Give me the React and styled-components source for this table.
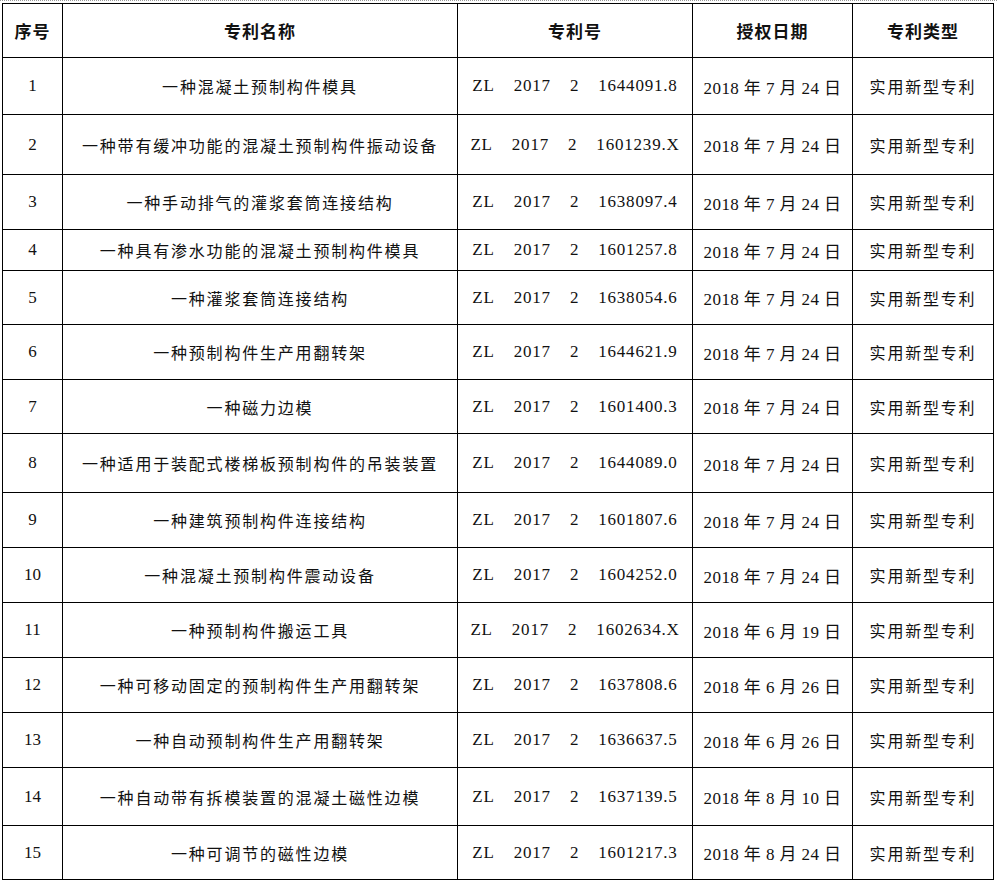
import styled, { createGlobalStyle } from 'styled-components';

const GlobalStyle = createGlobalStyle`
    html, body {
        margin: 0;
        padding: 0;
        background: #fff;
    }
`

const patents = [
    { no: 1, name: '一种混凝土预制构件模具', num: '1644091.8', month: 7, day: 24, h: 57 },
    { no: 2, name: '一种带有缓冲功能的混凝土预制构件振动设备', num: '1601239.X', month: 7, day: 24, h: 60 },
    { no: 3, name: '一种手动排气的灌浆套筒连接结构', num: '1638097.4', month: 7, day: 24, h: 55 },
    { no: 4, name: '一种具有渗水功能的混凝土预制构件模具', num: '1601257.8', month: 7, day: 24, h: 41 },
    { no: 5, name: '一种灌浆套筒连接结构', num: '1638054.6', month: 7, day: 24, h: 54 },
    { no: 6, name: '一种预制构件生产用翻转架', num: '1644621.9', month: 7, day: 24, h: 55 },
    { no: 7, name: '一种磁力边模', num: '1601400.3', month: 7, day: 24, h: 54 },
    { no: 8, name: '一种适用于装配式楼梯板预制构件的吊装装置', num: '1644089.0', month: 7, day: 24, h: 59 },
    { no: 9, name: '一种建筑预制构件连接结构', num: '1601807.6', month: 7, day: 24, h: 55 },
    { no: 10, name: '一种混凝土预制构件震动设备', num: '1604252.0', month: 7, day: 24, h: 55 },
    { no: 11, name: '一种预制构件搬运工具', num: '1602634.X', month: 6, day: 19, h: 55 },
    { no: 12, name: '一种可移动固定的预制构件生产用翻转架', num: '1637808.6', month: 6, day: 26, h: 55 },
    { no: 13, name: '一种自动预制构件生产用翻转架', num: '1636637.5', month: 6, day: 26, h: 55 },
    { no: 14, name: '一种自动带有拆模装置的混凝土磁性边模', num: '1637139.5', month: 8, day: 10, h: 58 },
    { no: 15, name: '一种可调节的磁性边模', num: '1601217.3', month: 8, day: 24, h: 54 },
]

const App = () => {
    return (
        <Page>
            <GlobalStyle />
            <Table>
                <colgroup>
                    <col style={{ width: 60 }} />
                    <col style={{ width: 395 }} />
                    <col style={{ width: 235 }} />
                    <col style={{ width: 160 }} />
                    <col style={{ width: 141 }} />
                </colgroup>
                <thead>
                    <Row $h={54}>
                        <Th>序号</Th>
                        <Th>专利名称</Th>
                        <Th>专利号</Th>
                        <Th>授权日期</Th>
                        <Th>专利类型</Th>
                    </Row>
                </thead>
                <tbody>
                    {patents.map((p) => (
                        <Row key={p.no} $h={p.h}>
                            <NumCell>{p.no}</NumCell>
                            <NameCell>{p.name}</NameCell>
                            <Td>
                                <PatentNo>
                                    <span>ZL</span>
                                    <span>2017</span>
                                    <span>2</span>
                                    <span>{p.num}</span>
                                </PatentNo>
                            </Td>
                            <DateCell>2018 年 {p.month} 月 {p.day} 日</DateCell>
                            <NameCell>实用新型专利</NameCell>
                        </Row>
                    ))}
                </tbody>
            </Table>
        </Page>
    )
}

const Page = styled.div`
    border-top: 1px dotted #9a9a9a;
    padding: 2px 0 0 2px;
    width: 997px;
    box-sizing: border-box;
`
const Table = styled.table`
    border-collapse: collapse;
    table-layout: fixed;
    width: 991px;
    color: #111;
`
const Row = styled.tr`
    height: ${(p) => p.$h}px;
`
const Th = styled.th`
    border: 1px solid #000;
    padding: 0;
    text-align: center;
    vertical-align: middle;
    font-family: "Noto Sans CJK SC", sans-serif;
    font-size: 17px;
    font-weight: 700;
    letter-spacing: 1px;
`
const Td = styled.td`
    border: 1px solid #000;
    padding: 0;
    text-align: center;
    vertical-align: middle;
    font-family: "Liberation Serif", "Noto Sans CJK SC", serif;
    font-size: 17px;
`
const NumCell = styled(Td)`
    font-size: 17px;
`
const NameCell = styled(Td)`
    font-family: "Noto Sans CJK SC", sans-serif;
    font-size: 16px;
    letter-spacing: 1.8px;
    white-space: nowrap;
`
const DateCell = styled(Td)`
    letter-spacing: 0.4px;
    white-space: nowrap;
`
const PatentNo = styled.div`
    display: flex;
    justify-content: center;
    gap: 19px;
    letter-spacing: 0.8px;
    font-variant-numeric: tabular-nums;
`

export default App
